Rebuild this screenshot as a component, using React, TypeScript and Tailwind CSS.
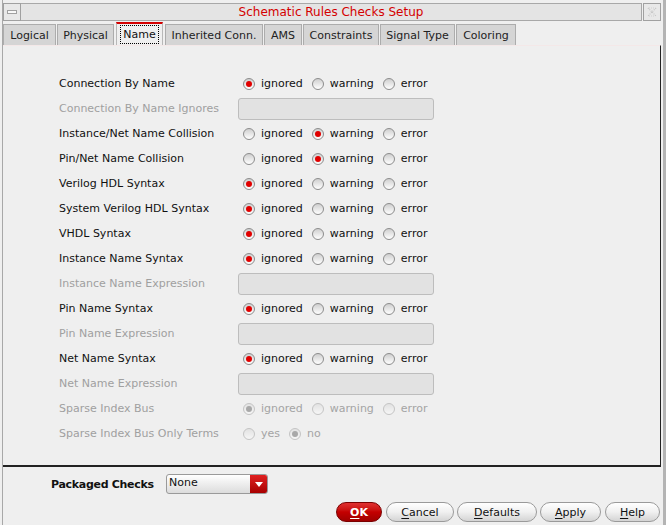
import React from "react";

type Opt = { label: string; checked?: boolean };

function Radio({ checked, disabled }: { checked?: boolean; disabled?: boolean }) {
  return (
    <div
      className={
        "w-[12px] h-[12px] rounded-full border flex items-center justify-center shrink-0 " +
        (disabled
          ? "border-[#c4c4c4] bg-gradient-to-b from-[#e2e2e2] to-[#f6f6f6]"
          : "border-[#8c8c8c] bg-gradient-to-b from-[#cfcfcf] to-[#ffffff]")
      }
    >
      {checked && (
        <div
          className={
            "w-[6px] h-[6px] rounded-full " +
            (disabled ? "bg-[#a8a8a8]" : "bg-[#e00000]")
          }
        />
      )}
    </div>
  );
}

function RadioGroup({ opts, disabled }: { opts: Opt[]; disabled?: boolean }) {
  return (
    <div className="flex items-center ml-[5px]">
      {opts.map((o, i) => (
        <div key={i} className={"flex items-center gap-[6px] " + (i > 0 ? "ml-[9px]" : "")}>
          <Radio checked={o.checked} disabled={disabled} />
          <span className={disabled ? "text-[#a4a4a4]" : "text-[#111]"}>{o.label}</span>
        </div>
      ))}
    </div>
  );
}

const iwe = (sel: number): Opt[] => [
  { label: "ignored", checked: sel === 0 },
  { label: "warning", checked: sel === 1 },
  { label: "error", checked: sel === 2 },
];

type Row =
  | { kind: "radio"; label: string; sel: number; disabled?: boolean }
  | { kind: "field"; label: string }
  | { kind: "yesno"; label: string };

const rows: Row[] = [
  { kind: "radio", label: "Connection By Name", sel: 0 },
  { kind: "field", label: "Connection By Name Ignores" },
  { kind: "radio", label: "Instance/Net Name Collision", sel: 1 },
  { kind: "radio", label: "Pin/Net Name Collision", sel: 1 },
  { kind: "radio", label: "Verilog HDL Syntax", sel: 0 },
  { kind: "radio", label: "System Verilog HDL Syntax", sel: 0 },
  { kind: "radio", label: "VHDL Syntax", sel: 0 },
  { kind: "radio", label: "Instance Name Syntax", sel: 0 },
  { kind: "field", label: "Instance Name Expression" },
  { kind: "radio", label: "Pin Name Syntax", sel: 0 },
  { kind: "field", label: "Pin Name Expression" },
  { kind: "radio", label: "Net Name Syntax", sel: 0 },
  { kind: "field", label: "Net Name Expression" },
  { kind: "radio", label: "Sparse Index Bus", sel: 0, disabled: true },
  { kind: "yesno", label: "Sparse Index Bus Only Terms" },
];

const tabs = [
  { label: "Logical", w: "w-[53px]", ml: "" },
  { label: "Physical", w: "w-[57px]", ml: "ml-[1px]" },
  { label: "Name", w: "w-[47px]", ml: "ml-[2px]", active: true },
  { label: "Inherited Conn.", w: "w-[98px]", ml: "ml-[2px]" },
  { label: "AMS", w: "w-[38px]", ml: "ml-[1px]" },
  { label: "Constraints", w: "w-[76px]", ml: "ml-[1px]" },
  { label: "Signal Type", w: "w-[75px]", ml: "ml-[1px]" },
  { label: "Coloring", w: "w-[60px]", ml: "ml-[1px]" },
];

function Btn({ w, ml, first, rest, ok }: { w: string; ml: string; first: string; rest: string; ok?: boolean }) {
  return (
    <div
      className={
        "h-[20px] rounded-full border flex items-center justify-center " +
        w +
        " " +
        ml +
        " " +
        (ok
          ? "border-[#7a0000] bg-gradient-to-b from-[#e03030] via-[#c40000] to-[#a00000] text-white font-bold"
          : "border-[#9a9a9a] bg-gradient-to-b from-[#ffffff] via-[#f0f0f0] to-[#d4d4d4] text-[#111]")
      }
    >
      <span>
        <span className="underline underline-offset-2">{first}</span>
        {rest}
      </span>
    </div>
  );
}

export default function App() {
  return (
    <div
      className="w-[666px] h-[525px] bg-[#efefef] text-[11px] leading-none overflow-hidden flex"
      style={{ fontFamily: '"DejaVu Sans", sans-serif' }}
    >
      {/* left frame */}
      <div className="w-[2px] h-full bg-[#efefef]" />
      <div className="w-[1px] h-full bg-[#a8a8a8]" />
      <div className="flex-1 flex flex-col">
        {/* title bar */}
        <div className="h-[22px] pt-[3px] flex">
          <div className="w-[18px] h-[18px] border border-[#a0a0a0] bg-[#e8e8e8] flex items-center justify-center">
            <div className="w-[10px] h-[4px] border border-[#a0a0a0] bg-[#f8f8f8]" />
          </div>
          <div className="flex-1 h-[18px] border-y border-r border-[#a8a8a8] bg-[#e4e4e4] flex items-center justify-center">
            <span className="text-[12px] text-[#d40000]">Schematic Rules Checks Setup</span>
          </div>
          <div className="w-[18px] h-[18px] ml-[1px] mr-[2px] border border-[#a0a0a0] bg-[#e8e8e8] flex items-center justify-center">
            <svg width="10" height="10" viewBox="0 0 10 10">
              <path d="M1 1 L9 9 M9 1 L1 9" stroke="#c4c4c4" strokeWidth="1.2" strokeDasharray="1 1" fill="none" />
              <path d="M2 1 L8 1 M2 9 L8 9" stroke="#d0d0d0" strokeWidth="1" strokeDasharray="1 1" fill="none" />
            </svg>
          </div>
        </div>
        {/* tabs */}
        <div className="h-[23px] flex items-end">
          {tabs.map((t, i) => (
            <div
              key={i}
              className={
                t.w +
                " " +
                t.ml +
                " flex items-center justify-center border-x border-t " +
                (t.active
                  ? "h-[23px] border-[#b8b8b8] border-t-[2px] border-t-[#d40000] bg-[#efefef]"
                  : "h-[21px] border-[#acacac] bg-[#d5d5d5]")
              }
            >
              {t.active ? (
                <span className="border border-dotted border-black px-[2px] py-[3px] text-[#111]">{t.label}</span>
              ) : (
                <span className="text-[#222]">{t.label}</span>
              )}
            </div>
          ))}
        </div>
        {/* panel */}
        <div className="h-[422px] mr-[2px] border-t border-t-[#f4e8e8] border-r border-r-[#222] border-b-2 border-b-[#222] pt-[25px] flex flex-col">
          {rows.map((r, i) => (
            <div key={i} className="h-[25px] flex items-center">
              <div
                className={
                  "w-[235px] pl-[56px] shrink-0 " +
                  (r.kind === "field" || r.kind === "yesno" || (r.kind === "radio" && r.disabled)
                    ? "text-[#a0a0a0]"
                    : "text-[#111]")
                }
              >
                {r.label}
              </div>
              {r.kind === "radio" && <RadioGroup opts={iwe(r.sel)} disabled={r.disabled} />}
              {r.kind === "field" && (
                <div className="w-[196px] h-[22px] rounded-[3px] border border-[#bdbdbd] bg-[#e2e2e2]" />
              )}
              {r.kind === "yesno" && (
                <RadioGroup
                  opts={[
                    { label: "yes" },
                    { label: "no", checked: true },
                  ]}
                  disabled
                />
              )}
            </div>
          ))}
        </div>
        {/* bottom */}
        <div className="flex flex-col">
          <div className="mt-[7px] h-[20px] flex items-center pl-[48px]">
            <div className="w-[115px] font-bold text-[#111] tracking-[-0.3px]">Packaged Checks</div>
            <div className="w-[102px] h-[20px] rounded-[3px] border border-[#9a9a9a] bg-gradient-to-b from-[#ffffff] to-[#dcdcdc] flex overflow-hidden">
              <div className="flex-1 pl-[2px] pt-[2px] text-[#111]">None</div>
              <div className="w-[17px] h-full bg-gradient-to-b from-[#e02020] to-[#a80000] flex items-center justify-center">
                <svg width="8" height="5" viewBox="0 0 8 5">
                  <path d="M0 0 L8 0 L4 5 Z" fill="#ffffff" />
                </svg>
              </div>
            </div>
          </div>
          <div className="mt-[8px] flex">
            <Btn ok w="w-[46px]" ml="ml-[333px]" first="O" rest="K" />
            <Btn w="w-[68px]" ml="ml-[4px]" first="C" rest="ancel" />
            <Btn w="w-[80px]" ml="ml-[3px]" first="D" rest="efaults" />
            <Btn w="w-[61px]" ml="ml-[3px]" first="A" rest="pply" />
            <Btn w="w-[55px]" ml="ml-[4px]" first="H" rest="elp" />
          </div>
        </div>
      </div>
      {/* right frame */}
      <div className="w-[3px] h-full bg-[#b4b4b4]" />
    </div>
  );
}
